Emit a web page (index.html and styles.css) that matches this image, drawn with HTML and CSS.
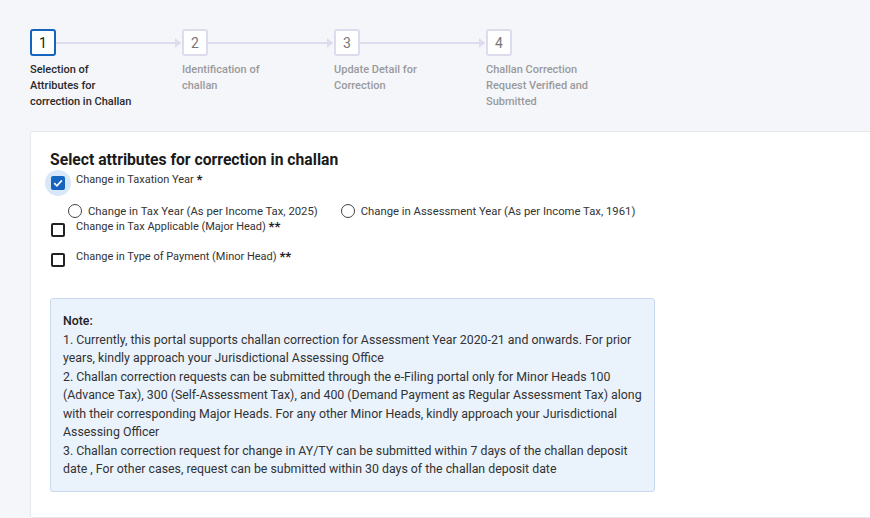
FILE: index.html
```html
<!DOCTYPE html>
<html>
<head>
<meta charset="utf-8">
<link rel="stylesheet" href="styles.css">
</head>
<body>
<div class="page">
  <div class="stepper">
    <div class="step active">
      <div class="step-head"><div class="step-box">1</div><div class="conn"></div></div>
      <div class="step-label">Selection of Attributes for correction in Challan</div>
    </div>
    <div class="step">
      <div class="step-head"><div class="step-box">2</div><div class="conn"></div></div>
      <div class="step-label">Identification of challan</div>
    </div>
    <div class="step">
      <div class="step-head"><div class="step-box">3</div><div class="conn"></div></div>
      <div class="step-label">Update Detail for Correction</div>
    </div>
    <div class="step last">
      <div class="step-head"><div class="step-box">4</div></div>
      <div class="step-label">Challan Correction Request Verified and Submitted</div>
    </div>
  </div>

  <div class="card">
    <h2 class="title">Select attributes for correction in challan</h2>
    <div class="opt">
      <span class="cb checked"><svg viewBox="0 0 14 14" width="14" height="14"><path d="M3.2 7.2 L5.9 9.8 L10.9 4.4" fill="none" stroke="#fff" stroke-width="1.6"/></svg></span>
      <span class="opt-label">Change in Taxation Year <span class="req">*</span></span>
    </div>
    <div class="radios">
      <label class="radio"><span class="rd"></span>Change in Tax Year (As per Income Tax, 2025)</label>
      <label class="radio"><span class="rd"></span>Change in Assessment Year (As per Income Tax, 1961)</label>
    </div>
    <div class="opt">
      <span class="cb"></span>
      <span class="opt-label">Change in Tax Applicable (Major Head) <span class="req">**</span></span>
    </div>
    <div class="opt opt-last">
      <span class="cb"></span>
      <span class="opt-label">Change in Type of Payment (Minor Head) <span class="req">**</span></span>
    </div>

    <div class="note">
      <div class="note-title">Note:</div>
      <div>1. Currently, this portal supports challan correction for Assessment Year 2020-21 and onwards. For prior years, kindly approach your Jurisdictional Assessing Office</div>
      <div>2. Challan correction requests can be submitted through the e-Filing portal only for Minor Heads 100 (Advance Tax), 300 (Self-Assessment Tax), and 400 (Demand Payment as Regular Assessment Tax) along with their corresponding Major Heads. For any other Minor Heads, kindly approach your Jurisdictional Assessing Officer</div>
      <div>3. Challan correction request for change in AY/TY can be submitted within 7 days of the challan deposit date , For other cases, request can be submitted within 30 days of the challan deposit date</div>
    </div>
  </div>
</div>
</body>
</html>
```

FILE: styles.css
```css
html, body {
  margin: 0;
  padding: 0;
  background: #f5f6fa;
  overflow: hidden;
  font-family: Roboto, "Liberation Sans", sans-serif;
}
.page {
  width: 870px;
  height: 518px;
  overflow: hidden;
}
.stepper {
  display: flex;
  padding: 29px 0 0 30px;
  height: 131px;
  box-sizing: border-box;
}
.step {
  width: 152px;
  display: flex;
  flex-direction: column;
}
.step-head {
  display: flex;
  align-items: center;
  height: 27px;
}
.step-box {
  width: 26px;
  height: 27px;
  box-sizing: border-box;
  border: 2px solid #dcdcec;
  border-radius: 3px;
  background: #fff;
  display: flex;
  align-items: center;
  justify-content: center;
  font-size: 14px;
  color: #777;
  flex: none;
}
.step.active .step-box {
  border-color: #1565c0;
  color: #222;
}
.conn {
  flex: 1;
  height: 2px;
  background: #dcdcec;
  position: relative;
  margin-right: 1px;
}
.conn::after {
  content: "";
  position: absolute;
  right: 0;
  top: -4px;
  border-left: 6px solid #dcdcec;
  border-top: 5px solid transparent;
  border-bottom: 5px solid transparent;
}
.step-label {
  width: 106px;
  margin-top: 6px;
  font-size: 11px;
  line-height: 16px;
  color: #9a9a9a;
  font-weight: 500;
}
.step.active .step-label {
  color: #2a2a2a;
}
.card {
  margin-left: 30px;
  width: 880px;
  height: 387px;
  background: #fff;
  border: 1px solid #e4e7ef;
  border-radius: 3px;
  padding: 18px 19px 0;
  box-sizing: border-box;
  position: relative;
  z-index: 0;
}
.title {
  margin: 0 0 3px 0;
  font-size: 15.7px;
  line-height: 20px;
  font-weight: 700;
  color: #1a1a1a;
}
.opt {
  display: flex;
  align-items: flex-start;
  height: 20px;
  margin-bottom: 10px;
}
.cb {
  width: 14px;
  height: 14px;
  box-sizing: border-box;
  border: 2px solid #222;
  border-radius: 2px;
  margin: 3px 11px 0 1px;
  flex: none;
  position: relative;
}
.cb.checked {
  background: #1565c0;
  border-color: #1565c0;
}
.cb.checked svg {
  position: absolute;
  left: -2px;
  top: -2px;
}
.cb.checked::before {
  content: "";
  position: absolute;
  left: -8px;
  top: -8px;
  width: 26px;
  height: 26px;
  border-radius: 50%;
  background: #d9e8f8;
  z-index: -1;
}
.opt-label {
  font-size: 11px;
  line-height: 14px;
  color: #333;
}
.req {
  font-size: 13px;
  font-weight: 700;
  color: #222;
  vertical-align: top;
  line-height: 13px;
}
.radios {
  display: flex;
  padding-left: 18px;
  margin-bottom: 1px;
  height: 16px;
  align-items: center;
}
.radio {
  display: flex;
  align-items: center;
  font-size: 11.3px;
  color: #333;
  margin-right: 23px;
}
.rd {
  width: 14px;
  height: 14px;
  box-sizing: border-box;
  border: 1.5px solid #444;
  border-radius: 50%;
  margin-right: 6px;
}
.opt-last { margin-bottom: 0; }
.note {
  margin-top: 28px;
  width: 605px;
  box-sizing: border-box;
  background: #eaf2fc;
  border: 1px solid #c8d8ef;
  border-radius: 3px;
  padding: 13px 12px 12px;
  font-size: 12.35px;
  line-height: 18.5px;
  color: #333;
}
.note-title {
  font-weight: 500;
  color: #222;
}
```
